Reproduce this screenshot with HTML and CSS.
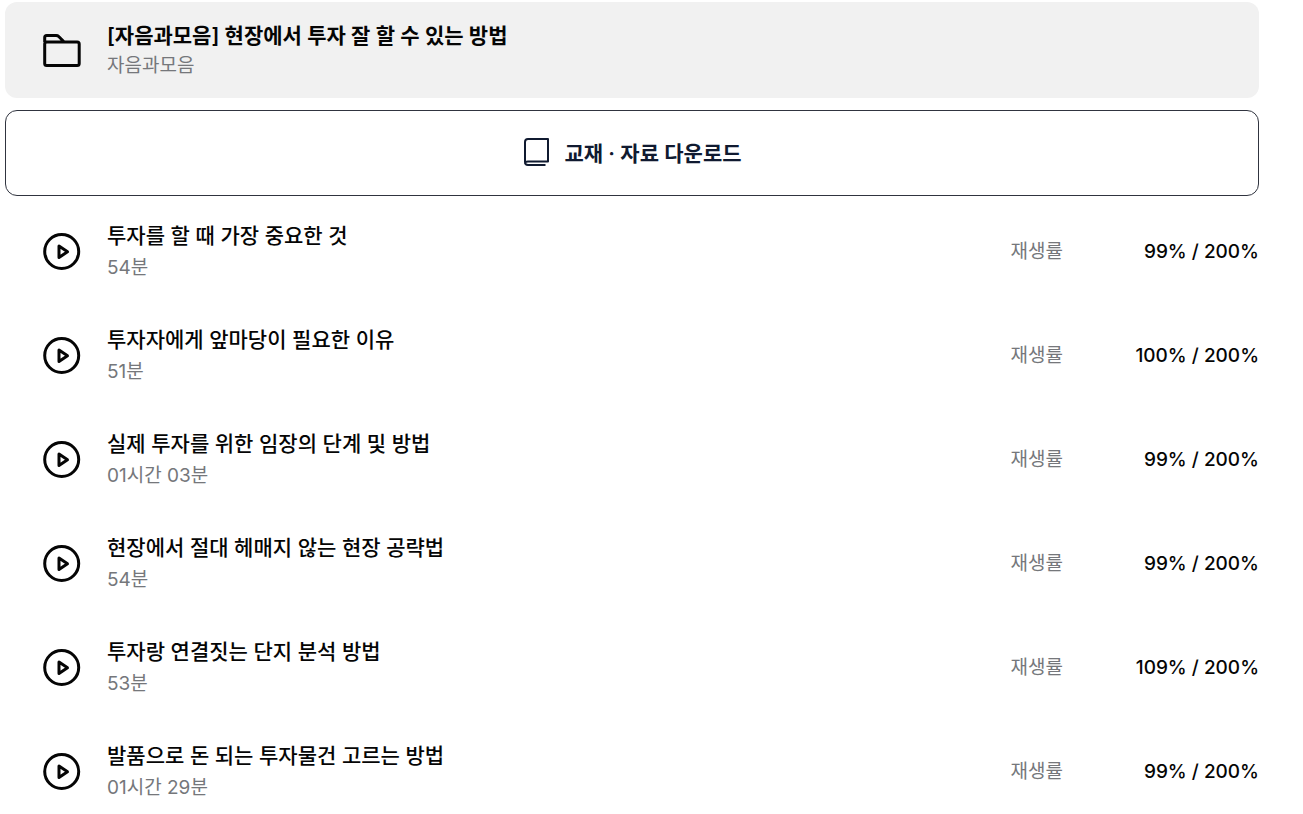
FILE: index.html
```html
<!DOCTYPE html>
<html lang="ko">
<head>
<meta charset="utf-8">
<meta name="viewport" content="width=device-width, initial-scale=1">
<title>[자음과모음] 현장에서 투자 잘 할 수 있는 방법</title>
<link rel="stylesheet" href="styles.css">
</head>
<body>
<svg class="sprite" aria-hidden="true">
  <symbol id="play" viewBox="0 0 40 40">
    <circle cx="19.700" cy="19.500" r="17" fill="none" stroke="currentColor" stroke-width="3"/>
    <path d="M17 14v11.500l8.500-5.700z" fill="none" stroke="currentColor" stroke-width="3" stroke-linejoin="round"/>
  </symbol>
</svg>
<main class="course">
  <header class="chapter">
    <svg class="icon" viewBox="0 0 40 40" aria-hidden="true">
      <path d="M2.700 11V6.500q0-2 2-2h9.500q1.500 0 2.500 1l5.500 5.500M4.700 11h30.500q2 0 2 2v19.500q0 2-2 2H4.700q-2 0-2-2V13q0-2 2-2z" fill="none" stroke="currentColor" stroke-width="3" stroke-linejoin="round"/>
    </svg>
    <div class="text">
      <h1 class="title strong">[자음과모음] 현장에서 투자 잘 할 수 있는 방법</h1>
      <p class="sub">자음과모음</p>
    </div>
  </header>
  <button class="download" type="button">
    <svg class="book" viewBox="0 0 28 30" aria-hidden="true">
      <path d="M23.500 28H6q-3 0-3-3V5q0-3 3-3h20v22.500H6q-3 0-3 2" fill="none" stroke="currentColor" stroke-width="2" stroke-linejoin="round"/>
    </svg>
    <span>교재 · 자료 다운로드</span>
  </button>
  <ul class="lessons">
    <li class="lesson">
      <svg class="icon" aria-hidden="true"><use href="#play"/></svg>
      <div class="text"><h2 class="title">투자를 할 때 가장 중요한 것</h2><p class="sub">54분</p></div>
      <span class="label">재생률</span><span class="rate">99% / 200%</span>
    </li>
    <li class="lesson">
      <svg class="icon" aria-hidden="true"><use href="#play"/></svg>
      <div class="text"><h2 class="title">투자자에게 앞마당이 필요한 이유</h2><p class="sub">51분</p></div>
      <span class="label">재생률</span><span class="rate">100% / 200%</span>
    </li>
    <li class="lesson">
      <svg class="icon" aria-hidden="true"><use href="#play"/></svg>
      <div class="text"><h2 class="title">실제 투자를 위한 임장의 단계 및 방법</h2><p class="sub">01시간 03분</p></div>
      <span class="label">재생률</span><span class="rate">99% / 200%</span>
    </li>
    <li class="lesson">
      <svg class="icon" aria-hidden="true"><use href="#play"/></svg>
      <div class="text"><h2 class="title">현장에서 절대 헤매지 않는 현장 공략법</h2><p class="sub">54분</p></div>
      <span class="label">재생률</span><span class="rate">99% / 200%</span>
    </li>
    <li class="lesson">
      <svg class="icon" aria-hidden="true"><use href="#play"/></svg>
      <div class="text"><h2 class="title">투자랑 연결짓는 단지 분석 방법</h2><p class="sub">53분</p></div>
      <span class="label">재생률</span><span class="rate">109% / 200%</span>
    </li>
    <li class="lesson">
      <svg class="icon" aria-hidden="true"><use href="#play"/></svg>
      <div class="text"><h2 class="title">발품으로 돈 되는 투자물건 고르는 방법</h2><p class="sub">01시간 29분</p></div>
      <span class="label">재생률</span><span class="rate">99% / 200%</span>
    </li>
  </ul>
</main>
</body>
</html>
```

FILE: styles.css
```css
* {
  box-sizing: border-box;
}

body {
  margin: 0;
  background: #fff;
  color: #050505;
  font-family: Inter, "Noto Sans CJK KR", sans-serif;
}

.sprite {
  display: none;
}

.course {
  margin: 2px 44px 0 5px;
}

.chapter,
.lesson {
  display: flex;
  align-items: center;
}

.chapter {
  min-height: 96px;
  padding: 2px 0 0 37px;
  border-radius: 12px;
  background: #f1f1f1;
}

.icon {
  flex: none;
  width: 40px;
  height: 40px;
  margin-right: 25px;
}

.text {
  flex: 1;
  min-width: 0;
}

.title,
.sub {
  margin: 0;
}

.title {
  font-size: 21px;
  line-height: 32px;
  font-weight: 500;
}

.strong {
  line-height: 30px;
  font-weight: 600;
}

.sub,
.label {
  color: #75777b;
  font-size: 19px;
  line-height: 32px;
}

.chapter .sub {
  line-height: 30px;
}

.download {
  display: flex;
  align-items: center;
  justify-content: center;
  gap: 14px;
  width: 100%;
  min-height: 86px;
  margin-top: 12px;
  padding: 0 0 2px;
  border: 1px solid #30343f;
  border-radius: 12px;
  background: #fff;
  color: #101a30;
  font: inherit;
  font-size: 21px;
  font-weight: 600;
}

.book {
  width: 28px;
  height: 30px;
}

.lessons {
  display: grid;
  gap: 40px;
  margin: 24px 0 0;
  padding: 0;
  list-style: none;
}

.lesson {
  padding-left: 37px;
}

.rate {
  width: 196px;
  font-size: 19px;
  line-height: 32px;
  font-weight: 500;
  text-align: right;
}
```
